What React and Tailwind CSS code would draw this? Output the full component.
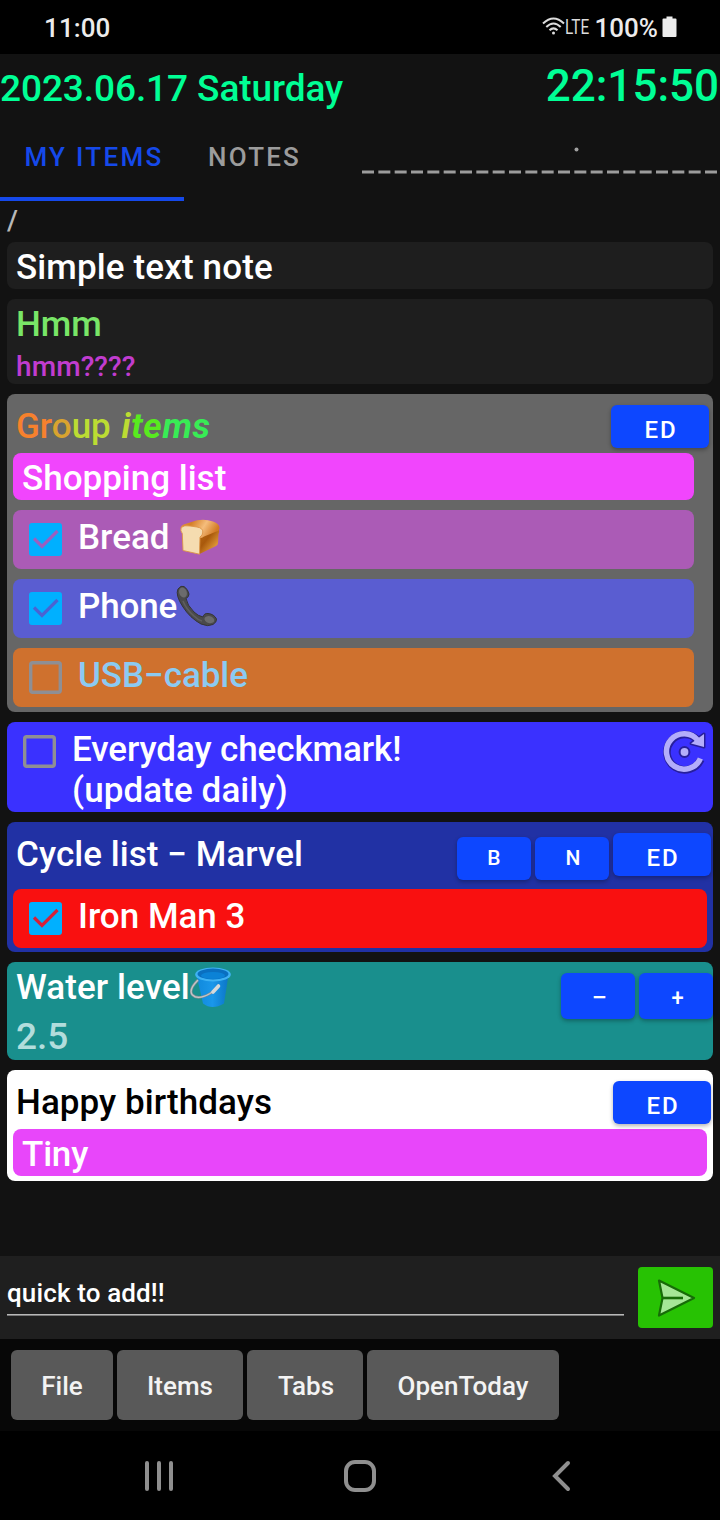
function Label({ className = '', children }) {
  return <span className={`block whitespace-pre leading-[40px] ${className}`}>{children}</span>;
}

function Check({ mark }) {
  return (
    <svg className="h-[33px] w-[33px] shrink-0" viewBox="0 0 33 33" fill="none">
      {mark ? (
        <>
          <rect width="33" height="33" rx="3" fill="#00b0ff" />
          <path d="M5 15.5 L13 23.5 L28.5 8" stroke={mark} strokeWidth="3.2" />
        </>
      ) : (
        <rect x="1.7" y="1.7" width="29.6" height="29.6" rx="2" stroke="#8f8f94" strokeWidth="3.4" />
      )}
    </svg>
  );
}

function Button({ className = '', children }) {
  return (
    <button
      className={`flex shrink-0 items-center justify-center rounded-[6px] bg-[#0d47ff] shadow-[0_2px_4px_rgba(0,0,0,0.3)] ${className}`}
    >
      {children}
    </button>
  );
}

function EditButton() {
  return (
    <Button className="h-[43px] w-[98px] pt-[6px] pl-[2px] text-[24px] tracking-[2px]">ED</Button>
  );
}

function Bread() {
  return (
    <svg className="mt-[9px] ml-[11px] h-[36px] w-[40px]" viewBox="0 0 40 36" role="img" aria-label="Bread">
      <defs>
        <linearGradient id="crust" x1="0" y1="0" x2="1" y2="1">
          <stop offset="0" stopColor="#b96a14" />
          <stop offset=".4" stopColor="#a9590c" />
          <stop offset=".75" stopColor="#dd9534" />
          <stop offset="1" stopColor="#f7c765" />
        </linearGradient>
        <linearGradient id="top" x1="0" y1="0" x2="1" y2="0.3">
          <stop offset="0" stopColor="#e79a45" />
          <stop offset=".3" stopColor="#d57f27" />
          <stop offset=".65" stopColor="#f5bd7c" />
          <stop offset="1" stopColor="#d27a25" />
        </linearGradient>
      </defs>
      <path d="M19 17 L38 10 Q40 12 38.5 15 L38 24 Q38 26 36 27 L19 35.3 Z" fill="url(#crust)" />
      <path d="M.8 9.500 Q0 6.500 6 4.700 L17 1.300 Q25 -.5 33 2.500 Q40 5 39.5 9.500 Q39 12 36.500 12.500 L24 17.500 Q22 19 20 19 L18 14 L4 12 Z" fill="url(#top)" />
      <path d="M1.200 8.500 Q4 5.800 10 7 L17 8 Q23 9 22.800 13 Q22.700 16.500 20 18 L19.500 35.200 L3 31.500 L2.300 14.500 Q0 12 1.200 8.500 Z" fill="#f5dcb0" stroke="#dc9446" strokeWidth=".9" />
    </svg>
  );
}

function Phone() {
  return (
    <svg className="mt-[6px] -ml-[1px] h-[42px] w-[42px]" viewBox="0 0 42 42" role="img" aria-label="Phone">
      <path
        d="M2 4 Q5 0 8 1.500 Q12 4 13 9 Q13 12 10 13.500 Q11 20 18 27 Q22 31 27 32 Q28 28 32 28.500 Q38 29 40.500 34 Q41 37 37 39.500 Q32 42 25 39 Q14 33 7 22 Q-1 10 2 4 Z"
        fill="#4a4a4c"
        stroke="#353536"
        strokeWidth="1"
      />
      <ellipse cx="7" cy="7.500" rx="3.800" ry="5" fill="#6b6b6d" transform="rotate(-20 7 7.500)" />
      <ellipse cx="33.500" cy="34.500" rx="5" ry="3.400" fill="#6b6b6d" transform="rotate(15 33 34)" />
      <path d="M7 16 Q10 24 18 31 Q22 35 26 36" fill="none" stroke="#5e5e60" strokeWidth="1.600" />
    </svg>
  );
}

function Bucket() {
  return (
    <svg className="mt-[4px] h-[42px] w-[42px]" viewBox="0 0 42 42" role="img" aria-label="Bucket">
      <defs>
        <linearGradient id="pail" x1="0" y1="0" x2="1" y2="0">
          <stop offset="0" stopColor="#1089dc" />
          <stop offset=".5" stopColor="#1a97ea" />
          <stop offset="1" stopColor="#0b75c6" />
        </linearGradient>
      </defs>
      <path d="M6.500 9 L13 37.500 Q22 44.500 34 37.500 L38.500 9 Z" fill="url(#pail)" />
      <ellipse cx="23" cy="8.500" rx="17.800" ry="7" fill="#3fb2f4" />
      <ellipse cx="23" cy="8" rx="15.500" ry="5.400" fill="#0a6fc0" />
      <ellipse cx="23" cy="9.500" rx="12" ry="3.600" fill="#0b82d6" />
      <path d="M8 14 Q-2 24 2.500 29 Q8 34.500 20 27.500 Q27 23 29 19" fill="none" stroke="#858b90" strokeWidth="2.600" />
      <path d="M8 14 Q-2 24 2.500 29 Q8 34.500 20 27.500 Q27 23 29 19" fill="none" stroke="#c3c7ca" strokeWidth="1.300" />
      <path d="M23 26 L28.500 20" stroke="#d5d9db" strokeWidth="3.600" strokeLinecap="round" />
    </svg>
  );
}

function CheckRow({ bg, mark, className = '', children }) {
  return (
    <div className={`flex h-[59px] items-start rounded-[8px] pl-[16px] ${bg}`}>
      <div className="pt-[13px]"><Check mark={mark} /></div>
      <Label className={`ml-[16px] pt-[8px] ${className}`}>{children[0]}</Label>
      {children[1]}
    </div>
  );
}

export default function App() {
  return (
    <div className="flex h-[1520px] w-[720px] flex-col overflow-hidden bg-[#121212] font-[Roboto,sans-serif] text-[35px] font-medium text-white">
      <div className="flex h-[54px] items-center bg-black pr-[43px] pl-[44px] text-[26px] text-[#ececec]">
        <span className="grow pt-[2px] tracking-[0.1px]">11:00</span>
        <svg className="mb-[3px] h-[18px] w-[23px]" viewBox="0 0 23 18" fill="none" stroke="#dcdcdc" strokeWidth="2">
          <path d="M1 6.500 Q11.500 -3.500 22 6.500" />
          <path d="M4.300 10 Q11.500 3 18.700 10" />
          <path d="M7.500 13.300 Q11.500 9.500 15.500 13.300" />
          <circle cx="11.500" cy="16" r="1.500" fill="#dcdcdc" stroke="none" />
        </svg>
        <span className="w-[30px] origin-left scale-x-[0.77] text-[20px] font-normal text-[#dcdcdc]">LTE</span>
        <span className="pt-[2px]">100%</span>
        <svg className="mb-[1px] ml-[4px] h-[22px] w-[15px]" viewBox="0 0 15 22" fill="#ececec">
          <path d="M4.500 .5 H10.500 V2.500 H13.500 Q14.500 2.500 14.500 3.500 V20 Q14.500 21 13.500 21 H1.500 Q.5 21 .5 20 V3.500 Q.5 2.500 1.500 2.500 H4.500 Z" />
        </svg>
      </div>

      <div className="flex h-[75px] items-start justify-between text-[#00ff95]">
        <Label className="pt-[15px] text-[37px] tracking-[-0.08px]">2023.06.17 Saturday</Label>
        <Label className="-ml-4 pt-[12px] pr-[1px] text-[44px]">22:15:50</Label>
      </div>

      <div className="flex h-[72px] text-[26px] tracking-[2.3px]">
        <div className="flex w-[184px] flex-col justify-between border-b-4 border-[#1549ea] text-center text-[#1549ea]">
          <Label className="pt-[8px] pl-[4px]">MY ITEMS</Label>
        </div>
        <Label className="pt-[8px] pl-[24px] tracking-[2.2px] text-[#9c9c9c]">NOTES</Label>
        <svg className="ml-auto h-[60px] w-[360px] shrink-0" viewBox="0 0 360 60">
          <circle cx="216.500" cy="20.500" r="2" fill="#a0a0a0" />
          <path d="M2 43 H358" stroke="#9c9c9c" strokeWidth="3.200" strokeDasharray="12 4.333" />
        </svg>
      </div>

      <Label className="h-[41px] pl-[7px] text-[28px] leading-[35px] text-[#b8b8b8]">/</Label>

      <div className="flex h-[1014px] flex-col gap-[10px] px-[7px]">
        <div className="h-[47px] rounded-[8px] bg-[#1e1e1e] pl-[9px]">
          <Label className="pt-[6px] tracking-[0.13px]">Simple text note</Label>
        </div>

        <div className="h-[85px] rounded-[8px] bg-[#1e1e1e] pl-[9px]">
          <Label className="pt-[6px] text-[#79e667]">Hmm</Label>
          <Label className="pt-[2px] text-[28px] tracking-[0.1px] text-[#c13ccf]">hmm????</Label>
        </div>

        <div className="h-[318px] rounded-[8px] bg-[#666666] pl-[6px]">
          <div className="flex h-[59px] items-start justify-between pr-[4px] pl-[3px]">
            <Label className="pt-[13px]">
              <span className="text-[#f7812d]">Gr</span>
              <span className="text-[#d9a32f]">o</span>
              <span className="text-[#bcdc33]">up </span>
              <span className="pl-[2px] font-bold tracking-[0.7px] italic">
                <span className="text-[#bcdc33]">i</span>
                <span className="text-[#58ea1f]">te</span>
                <span className="text-[#38ec55]">ms</span>
              </span>
            </Label>
            <div className="pt-[11px]"><EditButton /></div>
          </div>
          <div className="flex w-[681px] flex-col gap-[10px]">
            <div className="h-[47px] rounded-[8px] bg-[#f145fd] pl-[9px]">
              <Label className="pt-[6px]">Shopping list</Label>
            </div>
            <CheckRow bg="bg-[#ab5bb6]" mark="#9a60c0">{['Bread', <Bread key="e" />]}</CheckRow>
            <CheckRow bg="bg-[#5a5dd1]" mark="#4a63d2" className="tracking-[-0.15px]">{['Phone', <Phone key="e" />]}</CheckRow>
            <CheckRow bg="bg-[#cf712e]" className="tracking-[-0.05px] text-[#8bcaf2]">{['USB−cable', null]}</CheckRow>
          </div>
        </div>

        <div className="flex h-[90px] items-start rounded-[8px] bg-[#3a31ff] pl-[16px]">
          <div className="pt-[13px]"><Check /></div>
          <div className="grow pt-[7px] pl-[16px]">
            <Label className="leading-[41px] tracking-[-0.1px]">Everyday checkmark!</Label>
            <Label className="leading-[41px] tracking-[0.08px]">(update daily)</Label>
          </div>
          <svg className="mt-[7px] mr-[7px] h-[46px] w-[44px]" viewBox="0 0 44 46" fill="none">
            <path d="M38.800 30.500 A17.700 17.700 0 1 1 35.500 11" stroke="#271f9c" strokeWidth="7.600" />
            <path d="M29 14.500 L42 5 V18 Z" fill="#b3adfb" stroke="#271f9c" strokeWidth="3" strokeLinejoin="round" />
            <path d="M38.400 29.500 A17.700 17.700 0 1 1 36 11.500" stroke="#b3adfb" strokeWidth="5.500" />
            <path d="M29 14.500 L42 5 V18 Z" fill="#b3adfb" />
            <circle cx="22.500" cy="23" r="4.900" fill="#b3adfb" stroke="#271f9c" strokeWidth="2" />
          </svg>
        </div>

        <div className="h-[130px] rounded-[8px] bg-[#2131a4] px-[6px]">
          <div className="-mr-[4px] flex h-[67px] items-start pl-[3px]">
            <Label className="grow pt-[13px] tracking-[0.06px]">Cycle list − Marvel</Label>
            <div className="flex gap-[4px] pt-[11px]">
              <Button className="mt-[4px] h-[43px] w-[74px] pt-[1px] text-[21px]">B</Button>
              <Button className="mt-[4px] h-[43px] w-[74px] pt-[1px] pl-[2px] text-[21px]">N</Button>
              <EditButton />
            </div>
          </div>
          <CheckRow bg="bg-[#f91010]" mark="#d6203a">{['Iron Man 3', null]}</CheckRow>
        </div>

        <div className="flex h-[98px] items-start justify-between rounded-[8px] bg-[#198f8d] pl-[9px]">
          <div>
            <div className="flex h-[49px]">
              <Label className="pt-[6px] tracking-[0.08px]">Water level</Label>
              <Bucket />
            </div>
            <Label className="pt-[6px] text-[37px] text-[#b2dddc]">2.5</Label>
          </div>
          <div className="flex gap-[4px] pt-[11px]">
            <Button className="h-[46px] w-[74px] pt-[3px] pl-[3px] text-[22px]"><span className="scale-x-125">−</span></Button>
            <Button className="h-[46px] w-[74px] pt-[3px] pl-[3px] text-[22px]"><span className="scale-y-110">+</span></Button>
          </div>
        </div>

        <div className="h-[111px] rounded-[8px] bg-white px-[6px]">
          <div className="-mr-[4px] flex h-[59px] items-start justify-between pl-[3px]">
            <Label className="pt-[13px] tracking-[0.06px] text-black">Happy birthdays</Label>
            <div className="pt-[11px]"><EditButton /></div>
          </div>
          <div className="h-[47px] rounded-[8px] bg-[#e846fa] pl-[9px]">
            <Label className="pt-[6px] tracking-[-0.2px]">Tiny</Label>
          </div>
        </div>
      </div>

      <div className="flex h-[83px] items-start justify-between bg-[#1f1f1f] px-[7px] pt-[11px]">
        <div className="h-[48px] w-[617px] border-b border-[#b8b8b8] shadow-[0_1px_0_#777777]">
          <Label className="pt-[6px] text-[26px] tracking-[0.13px]">quick to add!!</Label>
        </div>
        <button className="flex h-[61px] w-[75px] items-center justify-center rounded-[4px] bg-[#27c203]">
          <svg className="h-[40px] w-[40px]" viewBox="0 0 40 40">
            <path d="M3 2.500 L38 20 L3 37.500 L6.500 20 Z" fill="#a5e697" stroke="#176b08" strokeWidth="2.200" strokeLinejoin="round" />
            <path d="M6.500 20 H27" stroke="#176b08" strokeWidth="2.600" />
          </svg>
        </button>
      </div>

      <div className="flex h-[92px] gap-[4px] bg-[#070707] pt-[11px] pl-[11px] text-[26px] text-[#f3f3f3]">
        <button className="h-[70px] w-[102px] rounded-[6px] bg-[#595959] pt-[3px]">File</button>
        <button className="h-[70px] w-[126px] rounded-[6px] bg-[#595959] pt-[3px]">Items</button>
        <button className="h-[70px] w-[116px] rounded-[6px] bg-[#595959] pt-[3px] pl-[2px]">Tabs</button>
        <button className="h-[70px] w-[192px] rounded-[6px] bg-[#595959] pt-[3px]">OpenToday</button>
      </div>

      <div className="flex h-[89px] items-start bg-black pt-[28px] pl-[143px]">
        <svg className="h-[34px] w-[32px]" viewBox="0 0 32 34" stroke="#8f8f8f" strokeWidth="4" strokeLinecap="round">
          <path d="M4 4 V30 M16 4 V30 M28 4 V30" />
        </svg>
        <svg className="ml-[168px] h-[34px] w-[34px]" viewBox="0 0 34 34" fill="none" stroke="#8f8f8f" strokeWidth="4">
          <rect x="3" y="3" width="28" height="28" rx="9" />
        </svg>
        <svg className="ml-[175px] h-[34px] w-[20px]" viewBox="0 0 20 34" fill="none" stroke="#8f8f8f" strokeWidth="4" strokeLinecap="round">
          <path d="M16 4 L3 17 L16 30" />
        </svg>
      </div>
    </div>
  );
}
